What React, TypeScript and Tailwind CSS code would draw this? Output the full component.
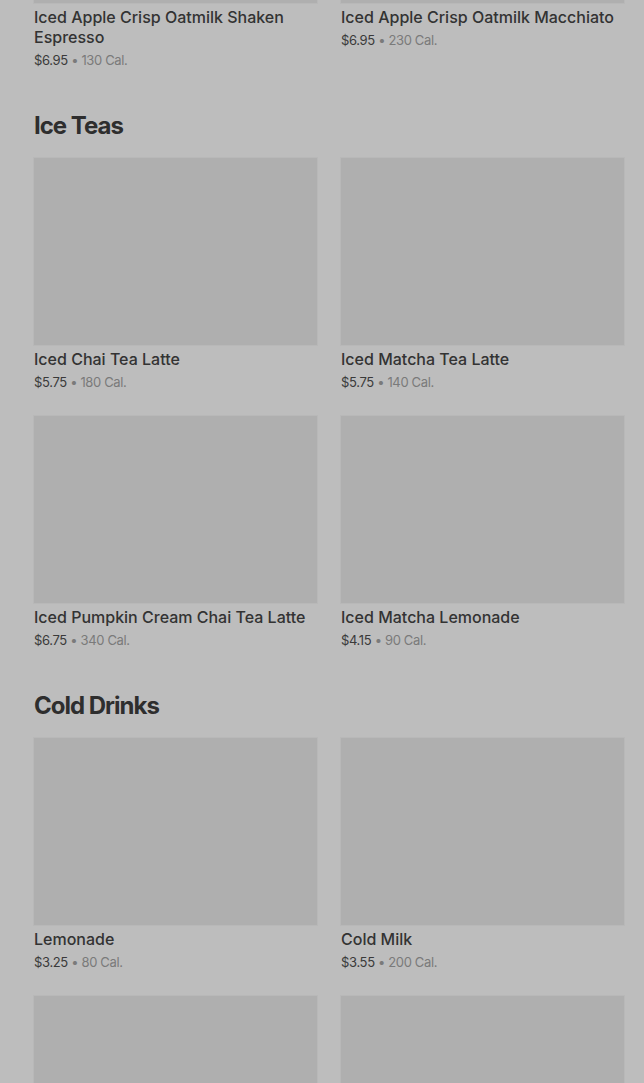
const font = { fontFamily: "Inter, 'Noto Sans', sans-serif" };

type Item = { name: string; price: string; cal: string };

const sections: Array<{ title: string | null; items: Item[] }> = [
  {
    title: null,
    items: [
      { name: "Iced Apple Crisp Oatmilk Shaken Espresso", price: "$6.95", cal: "130 Cal." },
      { name: "Iced Apple Crisp Oatmilk Macchiato", price: "$6.95", cal: "230 Cal." },
    ],
  },
  {
    title: "Ice Teas",
    items: [
      { name: "Iced Chai Tea Latte", price: "$5.75", cal: "180 Cal." },
      { name: "Iced Matcha Tea Latte", price: "$5.75", cal: "140 Cal." },
      { name: "Iced Pumpkin Cream Chai Tea Latte", price: "$6.75", cal: "340 Cal." },
      { name: "Iced Matcha Lemonade", price: "$4.15", cal: "90 Cal." },
    ],
  },
  {
    title: "Cold Drinks",
    items: [
      { name: "Lemonade", price: "$3.25", cal: "80 Cal." },
      { name: "Cold Milk", price: "$3.55", cal: "200 Cal." },
      { name: "", price: "", cal: "" },
      { name: "", price: "", cal: "" },
    ],
  },
];

function Card({ item }: { item: Item }) {
  return (
    <div>
      <div className="h-[187px] bg-[#afafaf] shadow-[0_0_0_1px_#b8b8b8]" />
      {item.name ? (
        <>
          <p className="mt-1 text-[16px] leading-5 font-medium text-[#333333]">
            {item.name}
          </p>
          <p className="mt-[3px] h-5 text-[13px] leading-5 tracking-[-0.35px] text-[#3a3a3a]">
            {item.price}
            <span className="text-[#7a7a7a]"> • {item.cal}</span>
          </p>
        </>
      ) : null}
    </div>
  );
}

export default function App() {
  return (
    <div className="h-[1083px] overflow-hidden bg-[#bdbdbd]" style={font}>
      <div className="-mt-[184px] pl-[34px] pr-5">
        {sections.map((s, i) => (
          <section key={i} className={i > 0 ? "mt-10" : ""}>
            {s.title ? (
              <h2 className="mb-4 text-[24px] leading-8 font-bold tracking-[-1px] text-[#2e2e2e]">
                {s.title}
              </h2>
            ) : null}
            <div className="grid grid-cols-2 gap-x-6 gap-y-6">
              {s.items.map((it, j) => (
                <Card key={j} item={it} />
              ))}
            </div>
          </section>
        ))}
      </div>
    </div>
  );
}
